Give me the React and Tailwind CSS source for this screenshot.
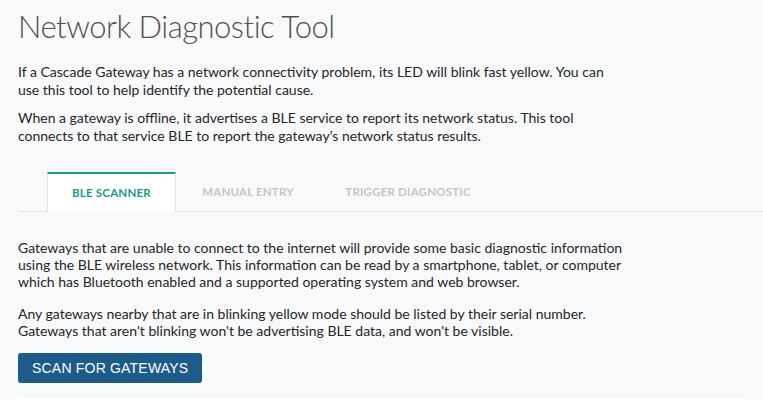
export default function App() {
  return (
    <div className="h-[400px] bg-[#f8f9fb] px-[18px] pt-[6px] font-['Lato','Liberation_Sans',sans-serif] text-[#262626] overflow-hidden">
      <h1 className="text-[31px] font-light leading-[40px] text-[#505050] tracking-[-0.5px]">Network Diagnostic Tool</h1>
      <div className="max-w-[610px] text-[14px] leading-[18px]">
        <p className="mt-[17px]">If a Cascade Gateway has a network connectivity problem, its LED will blink fast yellow. You can use this tool to help identify the potential cause.</p>
        <p className="mt-[10px]">When a gateway is offline, it advertises a BLE service to report its network status. This tool connects to that service BLE to report the gateway’s network status results.</p>
      </div>
      <div className="mt-[27px] -mr-[18px] flex border-b border-[#e3e5e8] pl-[29px]">
        <div className="-mb-px flex h-[40px] w-[129px] items-center justify-center border-x border-t-2 border-[#e3e5e8] border-t-[#16a08a] bg-white text-[11.5px] font-bold tracking-[0.2px] text-[#1b9a8c]">BLE SCANNER</div>
        <div className="flex h-[39px] w-[144px] items-center justify-center text-[11.5px] font-bold tracking-[0.2px] text-[#c6c6c6]">MANUAL ENTRY</div>
        <div className="flex h-[39px] w-[176px] items-center justify-center text-[11.5px] font-bold tracking-[0.2px] text-[#c6c6c6]">TRIGGER DIAGNOSTIC</div>
      </div>
      <div className="max-w-[610px] text-[14px] leading-[17px]">
        <p className="mt-[27px]">Gateways that are unable to connect to the internet will provide some basic diagnostic information using the BLE wireless network. This information can be read by a smartphone, tablet, or computer which has Bluetooth enabled and a supported operating system and web browser.</p>
        <p className="mt-[15px]">Any gateways nearby that are in blinking yellow mode should be listed by their serial number. Gateways that aren't blinking won't be advertising BLE data, and won't be visible.</p>
      </div>
      <button className="mt-[14px] h-[30px] rounded-[3px] bg-[#1d5b8b] px-[14px] font-['Liberation_Sans',sans-serif] text-[14px] tracking-[0.2px] text-white">SCAN FOR GATEWAYS</button>
      <div className="mt-[15px] h-[40px] bg-white"></div>
    </div>
  );
}
